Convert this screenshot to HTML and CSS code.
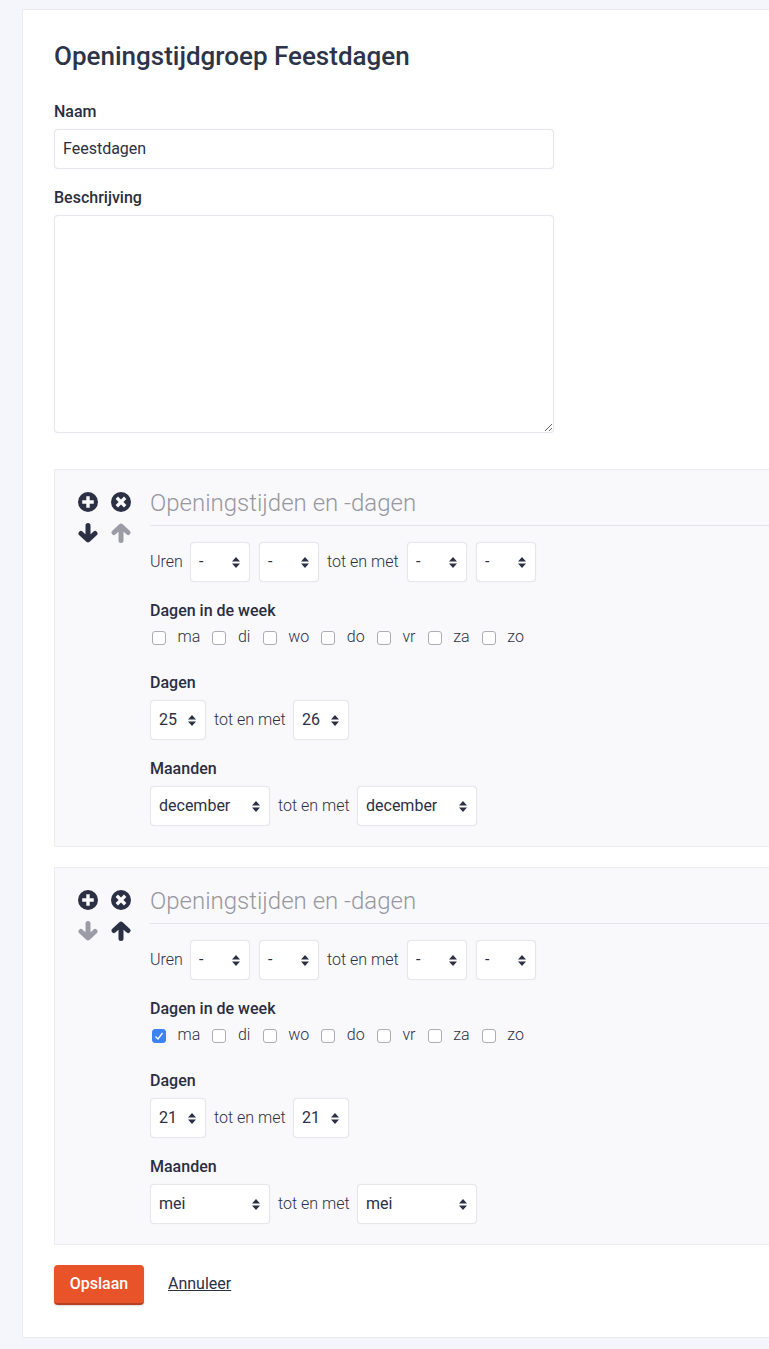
FILE: index.html
```html
<!DOCTYPE html>
<html lang="nl">
<head>
<meta charset="utf-8">
<title>Openingstijdgroep Feestdagen</title>
<link rel="stylesheet" href="styles.css">
</head>
<body>
<svg class="defs" width="0" height="0" aria-hidden="true">
  <symbol id="i-plus" viewBox="0 0 20 20"><path fill="currentColor" fill-rule="evenodd" d="M10 0a10 10 0 1 0 0 20a10 10 0 0 0 0-20ZM8.3 4.2h3.4v4.1h4.1v3.4h-4.1v4.1H8.3v-4.1H4.2V8.3h4.1Z"/></symbol>
  <symbol id="i-times" viewBox="0 0 20 20"><path fill="currentColor" fill-rule="evenodd" d="M10 0a10 10 0 1 0 0 20a10 10 0 0 0 0-20ZM7 4.6l3 3l3-3l2.4 2.4l-3 3l3 3L13 15.4l-3-3l-3 3L4.6 13l3-3l-3-3Z"/></symbol>
  <symbol id="i-down" viewBox="0 0 20 20"><path fill="none" stroke="currentColor" stroke-width="5" stroke-linecap="round" stroke-linejoin="round" d="M10 2.5V16M3 10.5l7 6.5l7-6.5"/></symbol>
  <symbol id="i-up" viewBox="0 0 20 20"><path fill="none" stroke="currentColor" stroke-width="5" stroke-linecap="round" stroke-linejoin="round" d="M10 17.5V4M3 9.5L10 3l7 6.5"/></symbol>
</svg>
<main class="card">
  <h1 class="page-title">Openingstijdgroep Feestdagen</h1>
  <form>
    <div class="field">
      <label class="label" for="naam">Naam</label>
      <input class="input" id="naam" type="text" value="Feestdagen">
    </div>
    <div class="field field-desc">
      <label class="label" for="beschrijving">Beschrijving</label>
      <textarea class="textarea" id="beschrijving"></textarea>
    </div>

    <section class="panel">
      <div class="tools">
        <svg class="icon"><use href="#i-plus"/></svg>
        <svg class="icon"><use href="#i-times"/></svg>
        <svg class="icon"><use href="#i-down"/></svg>
        <svg class="icon muted"><use href="#i-up"/></svg>
      </div>
      <div class="panel-body">
        <h2 class="panel-title">Openingstijden en -dagen</h2>
        <div class="row row-hours">
          <span class="txt">Uren</span>
          <select class="sel sel-time"><option>-</option></select>
          <select class="sel sel-time"><option>-</option></select>
          <span class="txt">tot en met</span>
          <select class="sel sel-time"><option>-</option></select>
          <select class="sel sel-time"><option>-</option></select>
        </div>
        <div class="label group-label">Dagen in de week</div>
        <div class="days">
          <label class="day"><input type="checkbox" class="check"><span>ma</span></label>
          <label class="day"><input type="checkbox" class="check"><span>di</span></label>
          <label class="day"><input type="checkbox" class="check"><span>wo</span></label>
          <label class="day"><input type="checkbox" class="check"><span>do</span></label>
          <label class="day"><input type="checkbox" class="check"><span>vr</span></label>
          <label class="day"><input type="checkbox" class="check"><span>za</span></label>
          <label class="day"><input type="checkbox" class="check"><span>zo</span></label>
        </div>
        <div class="label group-label group-dagen">Dagen</div>
        <div class="row">
          <select class="sel sel-day"><option>25</option></select>
          <span class="txt">tot en met</span>
          <select class="sel sel-day"><option>26</option></select>
        </div>
        <div class="label group-label">Maanden</div>
        <div class="row">
          <select class="sel sel-month"><option>december</option></select>
          <span class="txt">tot en met</span>
          <select class="sel sel-month"><option>december</option></select>
        </div>
      </div>
    </section>

    <section class="panel panel-next">
      <div class="tools">
        <svg class="icon"><use href="#i-plus"/></svg>
        <svg class="icon"><use href="#i-times"/></svg>
        <svg class="icon muted"><use href="#i-down"/></svg>
        <svg class="icon"><use href="#i-up"/></svg>
      </div>
      <div class="panel-body">
        <h2 class="panel-title">Openingstijden en -dagen</h2>
        <div class="row row-hours">
          <span class="txt">Uren</span>
          <select class="sel sel-time"><option>-</option></select>
          <select class="sel sel-time"><option>-</option></select>
          <span class="txt">tot en met</span>
          <select class="sel sel-time"><option>-</option></select>
          <select class="sel sel-time"><option>-</option></select>
        </div>
        <div class="label group-label">Dagen in de week</div>
        <div class="days">
          <label class="day"><input type="checkbox" class="check" checked><span>ma</span></label>
          <label class="day"><input type="checkbox" class="check"><span>di</span></label>
          <label class="day"><input type="checkbox" class="check"><span>wo</span></label>
          <label class="day"><input type="checkbox" class="check"><span>do</span></label>
          <label class="day"><input type="checkbox" class="check"><span>vr</span></label>
          <label class="day"><input type="checkbox" class="check"><span>za</span></label>
          <label class="day"><input type="checkbox" class="check"><span>zo</span></label>
        </div>
        <div class="label group-label group-dagen">Dagen</div>
        <div class="row">
          <select class="sel sel-day"><option>21</option></select>
          <span class="txt">tot en met</span>
          <select class="sel sel-day"><option>21</option></select>
        </div>
        <div class="label group-label">Maanden</div>
        <div class="row">
          <select class="sel sel-month"><option>mei</option></select>
          <span class="txt">tot en met</span>
          <select class="sel sel-month"><option>mei</option></select>
        </div>
      </div>
    </section>

    <div class="actions">
      <button class="btn" type="button">Opslaan</button>
      <a class="cancel" href="#">Annuleer</a>
    </div>
  </form>
</main>
</body>
</html>
```
FILE: styles.css
```css
* { box-sizing: border-box; }
html, body { height: 100%; overflow: hidden; }
body {
  margin: 0;
  background: #f4f6fb;
  color: #2b3044;
  font-family: Roboto, "Liberation Sans", sans-serif;
  font-size: 16px;
}
.defs { position: absolute; }
.card {
  width: 747px;
  height: 1329px;
  margin: 9px 0 0 22px;
  padding: 29px 0 0 31px;
  background: #fff;
  border: 1px solid #e9e9ef;
  border-right: 0;
}
.page-title {
  margin: 0;
  font-size: 26px;
  line-height: 34px;
  font-weight: 500;
  color: #2d3449;
}
.field { margin-top: 28px; }
.field-desc { margin-top: 18px; }
.label {
  display: block;
  font-size: 16px;
  line-height: 22px;
  font-weight: 500;
  color: #2a2e3f;
}
.input, .textarea {
  display: block;
  width: 500px;
  margin-top: 6px;
  background: #fff;
  border: 1px solid #e6e6ec;
  border-radius: 4px;
  box-shadow: 0 0 1px rgba(40,44,70,.12);
  font: 400 16px Roboto, "Liberation Sans", sans-serif;
  color: #2b3044;
}
.input { height: 40px; padding: 0 8px 2px; }
.textarea { height: 218px; padding: 8px; resize: vertical; }
.panel {
  display: flex;
  height: 378px;
  margin-top: 36px;
  padding: 17px 0 0 23px;
  background: #f9f9fc;
  border: 1px solid #ebebf0;
  border-right: 0;
  border-radius: 2px 0 0 2px;
}
.panel-next { margin-top: 20px; }
.tools {
  display: grid;
  grid-template-columns: 20px 20px;
  grid-auto-rows: 20px;
  column-gap: 13px;
  row-gap: 11px;
  align-content: start;
  padding-top: 5px;
  width: 72px;
  flex: none;
}
.icon { width: 20px; height: 20px; color: #2b3044; }
.icon.muted { color: #9b9ca6; }
.panel-body { flex: 1; }
.panel-title {
  margin: 0;
  height: 39px;
  font-size: 24px;
  line-height: 32px;
  font-weight: 300;
  color: #97979f;
  border-bottom: 1px solid #e4e4ea;
}
.row {
  display: flex;
  align-items: center;
  height: 40px;
  gap: 8px;
}
.row-hours { margin-top: 16px; }
.txt {
  flex: none;
  width: 71px;
  margin-bottom: 2px;
  white-space: nowrap;
  font-weight: 300;
  font-size: 16px;
  color: #2b3044;
}
.row-hours .txt:first-child { width: 32px; }
.row-hours .sel + .sel { margin-left: 1px; }
.row-hours .sel + .txt + .sel { margin-left: 1px; }
.sel {
  appearance: none;
  -webkit-appearance: none;
  height: 40px;
  padding: 0 8px 2px;
  background-color: #fff;
  background-image: url("data:image/svg+xml,%3Csvg xmlns='http://www.w3.org/2000/svg' width='8' height='11'%3E%3Cpath fill='%232b3044' d='M4 0l4 4.4H0zM4 11L0 6.6h8z'/%3E%3C/svg%3E");
  background-repeat: no-repeat;
  background-position: right 9px center;
  background-size: 8px 11px;
  border: 1px solid #e6e6ec;
  border-radius: 4px;
  box-shadow: 0 0 1px rgba(40,44,70,.1);
  font: 400 16px Roboto, "Liberation Sans", sans-serif;
  color: #2b3044;
}
.sel-time { width: 60px; }
.sel-day { width: 56px; }
.sel-month { width: 120px; }
.group-label { margin-top: 18px; }
.group-dagen { margin-top: 25px; }
.group-label + .row { margin-top: 6px; }
.days {
  display: flex;
  align-items: center;
  height: 20px;
  margin-top: 5px;
  padding-left: 2px;
}
.day {
  display: flex;
  align-items: center;
  margin-right: 12.2px;
  font-weight: 300;
  font-size: 16px;
  color: #2b3044;
}
.day span { margin: 0 0 2px 11.5px; }
.check {
  appearance: none;
  -webkit-appearance: none;
  width: 14px;
  height: 14px;
  margin: 1px 0 0;
  background: #fff;
  border: 1px solid #adadb4;
  border-radius: 3px;
}
.check:checked {
  border-color: #3b82f6;
  background-color: #3b82f6;
  background-image: url("data:image/svg+xml,%3Csvg xmlns='http://www.w3.org/2000/svg' width='12' height='12'%3E%3Cpath fill='none' stroke='%23fff' stroke-width='1.3' d='M2.5 6.5L5 9l4.5-6'/%3E%3C/svg%3E");
  background-repeat: no-repeat;
  background-position: center;
}
.actions {
  display: flex;
  align-items: center;
  margin-top: 20px;
}
.btn {
  width: 90px;
  height: 40px;
  padding: 0 0 2px;
  background: #e9532a;
  border: 0;
  border-bottom: 2px solid #b53f1e;
  border-radius: 4px;
  box-shadow: 0 1px 2px rgba(0,0,0,.15);
  font: 500 16px Roboto, "Liberation Sans", sans-serif;
  color: #fff;
}
.cancel {
  margin: 0 0 3px 24px;
  font-size: 16px;
  color: #2b3044;
  text-decoration: underline;
}
```
